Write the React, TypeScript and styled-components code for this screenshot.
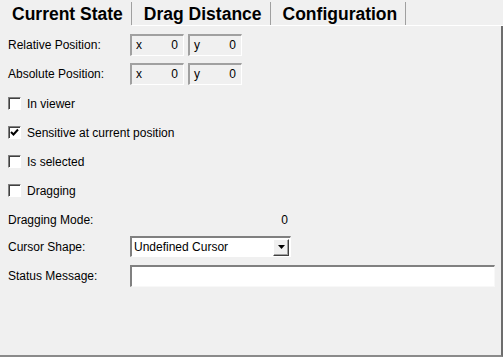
import styled, { createGlobalStyle } from "styled-components";

const GlobalStyle = createGlobalStyle`
  html, body {
    margin: 0;
    padding: 0;
    background: #f0f0f0;
  }
  body {
    font-family: "Liberation Sans", Arial, sans-serif;
    font-size: 12px;
    color: #000;
  }
`;

const Window = styled.div`
  width: 503px;
  height: 357px;
  display: flex;
  flex-direction: column;
  background: #f0f0f0;
`;

const TabBar = styled.div`
  display: flex;
  height: 26px;
  align-items: stretch;
`;

const Tab = styled.div<{ $active?: boolean }>`
  position: relative;
  display: flex;
  align-items: center;
  padding: 3px 9px 0 12px;
  font-size: 17.5px;
  font-weight: bold;
  border-bottom: 1px solid ${({ $active }) => ($active ? "transparent" : "#ffffff")};
  &::after {
    content: "";
    position: absolute;
    right: 0;
    top: 2px;
    bottom: 0;
    width: 1px;
    background: #a0a0a0;
  }
`;

const TabFill = styled.div`
  flex: 1;
  border-bottom: 1px solid #ffffff;
`;

const Panel = styled.div`
  flex: 1;
  display: flex;
  flex-direction: column;
  gap: 8px;
  padding: 8px 0 0 8px;
  border-right: 2px solid #6d6d6d;
  border-bottom: 2px solid #8a8a8a;
`;

const Row = styled.div<{ $shift?: number }>`
  display: flex;
  align-items: center;
  height: 21px;
  margin-top: ${({ $shift }) => $shift ?? 0}px;
`;

const Label = styled.span`
  width: 122px;
  flex: none;
`;

const CoordBox = styled.div`
  box-sizing: border-box;
  width: 54px;
  height: 22px;
  margin-right: 4px;
  display: flex;
  align-items: center;
  justify-content: space-between;
  padding: 0 5px 0 4px;
  border-top: 2px solid #a0a0a0;
  border-left: 2px solid #a0a0a0;
  border-right: 1px solid #ffffff;
  border-bottom: 1px solid #ffffff;
`;

const Box = styled.span`
  box-sizing: border-box;
  width: 13px;
  height: 13px;
  flex: none;
  background: #fff;
  border-top: 1px solid #808080;
  border-left: 1px solid #808080;
  border-right: 1px solid #fff;
  border-bottom: 1px solid #fff;
  box-shadow: inset 1px 1px 0 #404040;
  display: flex;
  align-items: center;
  justify-content: center;
  margin-right: 6px;
`;

const Value = styled.span`
  width: 160px;
  text-align: right;
  padding-right: 2px;
  box-sizing: border-box;
`;

const Select = styled.div`
  box-sizing: border-box;
  width: 161px;
  height: 21px;
  background: #fff;
  display: flex;
  align-items: center;
  border-top: 2px solid #808080;
  border-left: 2px solid #808080;
  border-right: 1px solid #fff;
  border-bottom: 1px solid #fff;
  padding: 0 1px 0 2px;
`;

const SelectText = styled.span`
  flex: 1;
`;

const ArrowButton = styled.span`
  box-sizing: border-box;
  width: 16px;
  height: 17px;
  background: #f0f0f0;
  border-top: 1px solid #fff;
  border-left: 1px solid #fff;
  border-right: 1px solid #404040;
  border-bottom: 1px solid #404040;
  box-shadow: inset -1px -1px 0 #a0a0a0;
  display: flex;
  align-items: center;
  justify-content: center;
`;

const TextInput = styled.div`
  box-sizing: border-box;
  width: 365px;
  height: 22px;
  background: #fff;
  border-top: 2px solid #808080;
  border-left: 2px solid #808080;
  border-right: 1px solid #f8f8f8;
  border-bottom: 1px solid #f8f8f8;
`;

const Check = ({ checked }: { checked?: boolean }) => (
  <Box>
    {checked && (
      <svg width="9" height="9" viewBox="0 0 9 9">
        <path d="M1 4 L3.5 6.5 L8 1.5" stroke="#000" strokeWidth="2" fill="none" />
      </svg>
    )}
  </Box>
);

const checks = [
  { label: "In viewer", checked: false },
  { label: "Sensitive at current position", checked: true },
  { label: "Is selected", checked: false },
  { label: "Dragging", checked: false },
];

export default function App() {
  return (
    <Window>
      <GlobalStyle />
      <TabBar>
        <Tab $active>Current State</Tab>
        <Tab>Drag Distance</Tab>
        <Tab>Configuration</Tab>
        <TabFill />
      </TabBar>
      <Panel>
        {["Relative Position:", "Absolute Position:"].map((l) => (
          <Row key={l}>
            <Label>{l}</Label>
            <CoordBox>
              <span>x</span>
              <span>0</span>
            </CoordBox>
            <CoordBox>
              <span>y</span>
              <span>0</span>
            </CoordBox>
          </Row>
        ))}
        {checks.map((c, i) => (
          <Row key={c.label} $shift={i === 0 ? 1 : 0}>
            <Check checked={c.checked} />
            {c.label}
          </Row>
        ))}
        <Row>
          <Label>Dragging Mode:</Label>
          <Value>0</Value>
        </Row>
        <Row $shift={-2}>
          <Label>Cursor Shape:</Label>
          <Select>
            <SelectText>Undefined Cursor</SelectText>
            <ArrowButton>
              <svg width="7" height="4" viewBox="0 0 7 4">
                <path d="M0 0 H7 L3.5 4 Z" fill="#000" />
              </svg>
            </ArrowButton>
          </Select>
        </Row>
        <Row>
          <Label>Status Message:</Label>
          <TextInput />
        </Row>
      </Panel>
    </Window>
  );
}
